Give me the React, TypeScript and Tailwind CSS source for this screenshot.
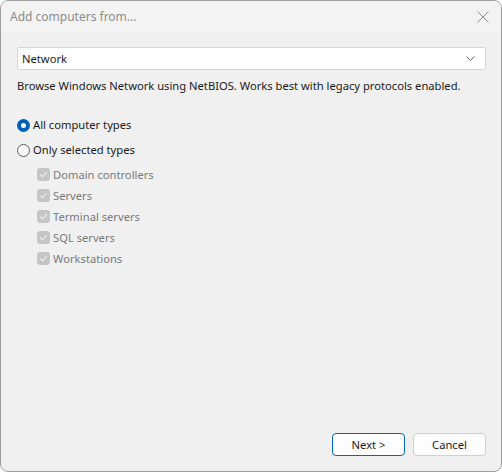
import { useState } from "react";

const types = ["Domain controllers", "Servers", "Terminal servers", "SQL servers", "Workstations"];

const Radio = ({ checked, label, onClick }: { checked: boolean; label: string; onClick: () => void }) => (
  <label className="flex items-center gap-[3px] h-[20px] cursor-default" onClick={onClick}>
    {checked ? (
      <span className="w-[13px] h-[13px] rounded-full bg-[#005fb8] flex items-center justify-center">
        <span className="w-[5px] h-[5px] rounded-full bg-white" />
      </span>
    ) : (
      <span className="w-[13px] h-[13px] rounded-full border border-[#5d5d5d] bg-[#f7f7f7]" />
    )}
    <span className="text-[#1a1a1a]">{label}</span>
  </label>
);

const DisabledCheck = ({ label }: { label: string }) => (
  <div className="flex items-center gap-[3px] h-[21px]">
    <span className="w-[13px] h-[13px] rounded-[3px] bg-[#c5c5c5] flex items-center justify-center">
      <svg width="9" height="9" viewBox="0 0 9 9" fill="none">
        <path d="M1.5 4.8 L3.6 6.8 L7.5 2.3" stroke="#eaeaea" strokeWidth="1.2" strokeLinecap="round" strokeLinejoin="round" />
      </svg>
    </span>
    <span className="text-[#7a7a7a]">{label}</span>
  </div>
);

export default function App() {
  const [all, setAll] = useState(true);

  return (
    <div
      className="w-[502px] h-[472px] bg-white text-[11.2px] leading-none"
      style={{ fontFamily: '"Noto Sans", "Liberation Sans", sans-serif' }}
    >
      <div className="w-full h-full rounded-[8px] border border-[#9d9d9d] bg-[#f0f0f0] flex flex-col overflow-hidden">
        {/* title bar */}
        <div className="h-[31px] bg-[#f3f3f3] flex items-center justify-between pl-[9px] pr-[12px] shrink-0">
          <span className="text-[#8c8c8c] text-[12px]">Add computers from...</span>
          <svg width="12" height="12" viewBox="0 0 12 12">
            <path d="M0.5 0.5 L11.5 11.5 M11.5 0.5 L0.5 11.5" stroke="#8c8c8c" strokeWidth="1" />
          </svg>
        </div>

        <div className="flex-1 flex flex-col pl-[16px] pr-[15px] pt-[15px] pb-[15px]">
          <div className="h-[23px] bg-white border border-[#d6d6d6] rounded-[2px] flex items-center justify-between pl-[4px] pr-[10px]">
            <span className="text-[#1a1a1a]">Network</span>
            <svg width="9" height="5" viewBox="0 0 9 5">
              <path d="M0.5 0.5 L4.5 4.5 L8.5 0.5" stroke="#5f5f5f" strokeWidth="1" fill="none" />
            </svg>
          </div>

          <p className="mt-[10px] text-[#1a1a1a] h-[14px] whitespace-nowrap">
            Browse Windows Network using NetBIOS. Works best with legacy protocols enabled.
          </p>

          <div className="mt-[21px] flex flex-col gap-[5px]">
            <Radio checked={all} label="All computer types" onClick={() => setAll(true)} />
            <Radio checked={!all} label="Only selected types" onClick={() => setAll(false)} />
          </div>

          <div className="mt-[4px] pl-[20px] flex flex-col">
            {types.map((t) => (
              <DisabledCheck key={t} label={t} />
            ))}
          </div>

          <div className="mt-auto flex justify-end gap-[8px]">
            <button className="w-[73px] h-[23px] rounded-[4px] bg-[#fdfdfd] border border-[#0067c0] text-[#1a1a1a]">
              Next &gt;
            </button>
            <button className="w-[73px] h-[23px] rounded-[4px] bg-[#fdfdfd] border border-[#d0d0d0] text-[#1a1a1a]">
              Cancel
            </button>
          </div>
        </div>
      </div>
    </div>
  );
}
